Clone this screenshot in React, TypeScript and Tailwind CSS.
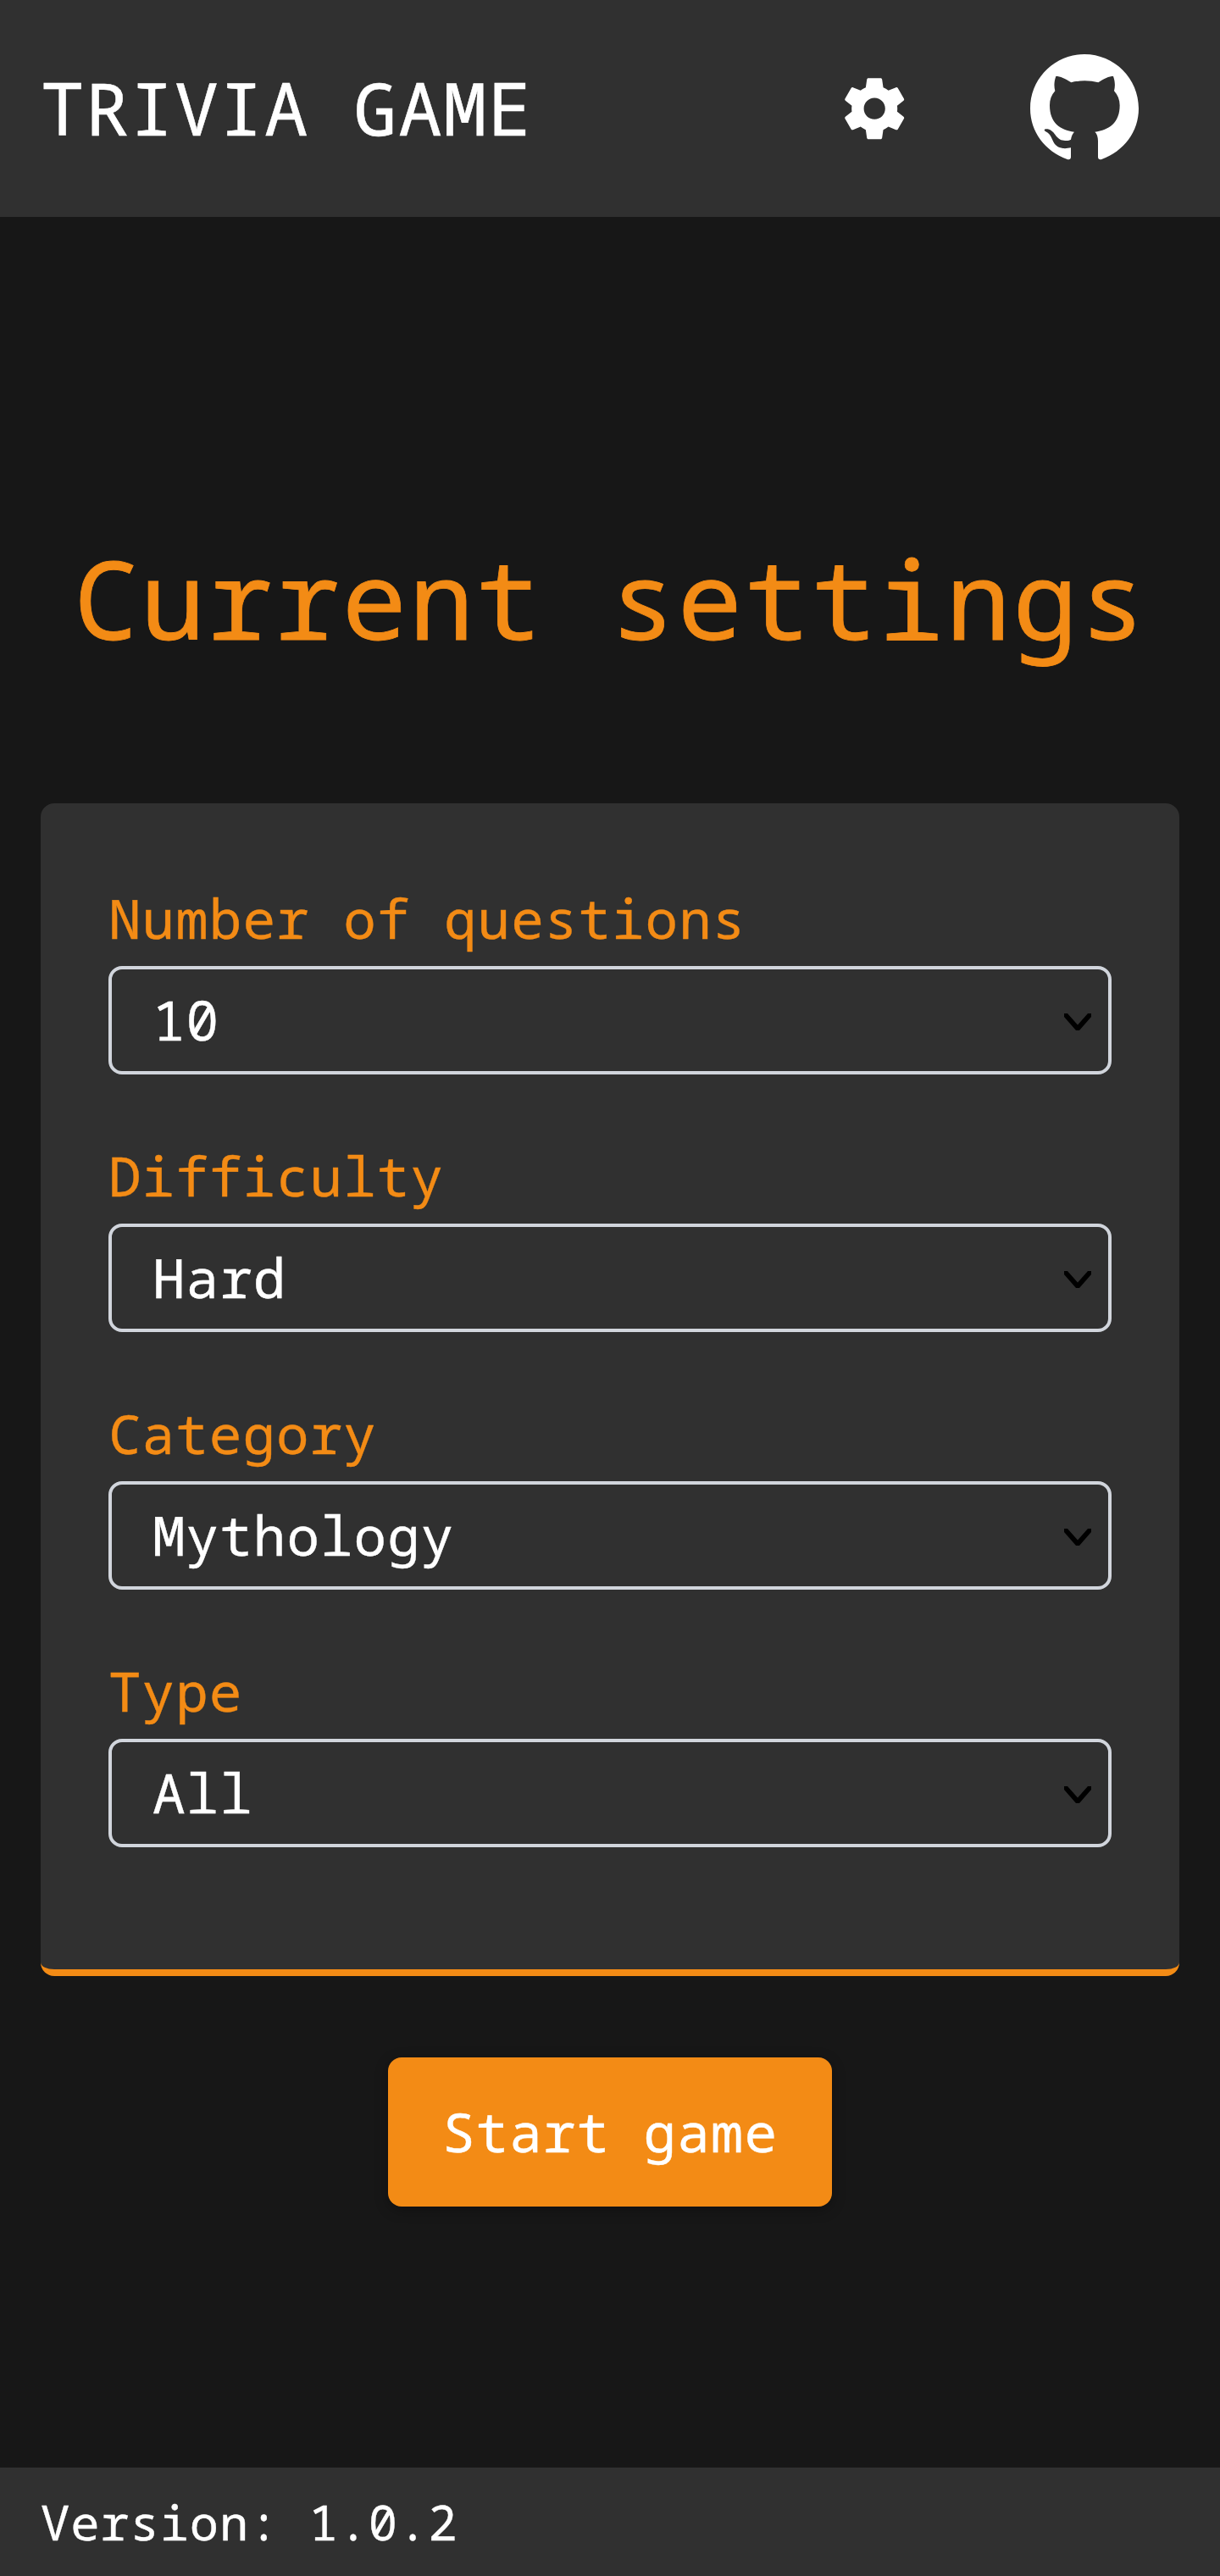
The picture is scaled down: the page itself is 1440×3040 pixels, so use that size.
type Field = { label: string; value: string };

const fields: Field[] = [
  { label: 'Number of questions', value: '10' },
  { label: 'Difficulty', value: 'Hard' },
  { label: 'Category', value: 'Mythology' },
  { label: 'Type', value: 'All' },
];

/* Em-based values resolve against each element's own font size. */
const mono = 'tracking-[0.0159em] [-webkit-text-stroke-width:0.006em]';

function GearIcon() {
  return (
    <svg viewBox="0 0 24 24" className="size-[86.4px]" fill="currentColor">
      <path d="M19.43 12.98c.04-.32.07-.64.07-.98s-.03-.66-.07-.98l2.11-1.65c.19-.15.24-.42.12-.64l-2-3.46c-.12-.22-.39-.3-.61-.22l-2.49 1c-.52-.4-1.08-.73-1.69-.98l-.38-2.65C14.46 2.18 14.25 2 14 2h-4c-.25 0-.46.18-.49.42l-.38 2.65c-.61.25-1.17.59-1.69.98l-2.49-1c-.23-.09-.49 0-.61.22l-2 3.46c-.13.22-.07.49.12.64l2.11 1.65c-.04.32-.07.65-.07.98s.03.66.07.98l-2.11 1.65c-.19.15-.24.42-.12.64l2 3.46c.12.22.39.3.61.22l2.49-1c.52.4 1.08.73 1.69.98l.38 2.65c.03.24.24.42.49.42h4c.25 0 .46-.18.49-.42l.38-2.65c.61-.25 1.17-.59 1.69-.98l2.49 1c.23.09.49 0 .61-.22l2-3.46c.12-.22.07-.49-.12-.64l-2.11-1.65zM12 15.5c-1.93 0-3.5-1.57-3.5-3.5s1.57-3.5 3.5-3.5 3.5 1.57 3.5 3.5-1.57 3.5-3.5 3.5z" />
    </svg>
  );
}

/* Octocat mark: a disc with the cat silhouette and its tail cut out. */
function GithubIcon() {
  return (
    <svg viewBox="0 0 384 384" className="size-32" fill="currentColor">
      <path d="M192 0C86 0 0 86 0 192c0 83 52 151 131 180 8 2 13-1 13-8v-33c-10 2-20 3-28 2-18-2-30-11-37-29-7-17-13-24-24-30-8-5-5-9 2-9 14 0 23 8 32 21 11 16 24 21 38 20 8 0 13-2 17-4 2-12 6-21 12-27-50-6-87-32-87-94 0-20 6-37 19-51-4-15-4-33 3-52 15 0 33 8 54 22 31-8 65-8 96 0 20-14 38-22 53-22 7 19 7 37 3 52 13 14 20 31 20 51 0 62-38 88-88 94 7 6 11 17 11 32v57c0 7 5 10 13 8 79-29 131-97 131-180C384 86 298 0 192 0z" />
    </svg>
  );
}

function SelectField({ label, value }: Field) {
  return (
    <div>
      <div className={`${mono} h-28 text-[64.3px] leading-[110px] text-[#f38b15]`}>{label}</div>
      <div className="flex h-32 items-center justify-between rounded-2xl border-4 border-gray-300 pr-5 pl-12">
        <span className={`${mono} h-[120px] text-[64.3px] leading-[118px]`}>{value}</span>
        <svg viewBox="0 0 32 20" className="mt-1 h-5 w-8" fill="#000">
          <path d="M0 0H4L16 13.5 28 0H32V4L18 20H14L0 4z" />
        </svg>
      </div>
    </div>
  );
}

export default function App() {
  return (
    <div className="flex h-[3040px] w-[1440px] flex-col bg-[#171717] font-['Noto_Sans_Mono','DejaVu_Sans_Mono',monospace] whitespace-nowrap text-white">
      <header className="flex h-64 shrink-0 items-center justify-between bg-[#303030] pr-24 pl-12">
        <h1 className={`${mono} pb-[2px] text-[85.7px] leading-[128px]`}>TRIVIA GAME</h1>
        <div className="flex items-center gap-[140.8px]">
          <GearIcon />
          <GithubIcon />
        </div>
      </header>

      <main className="flex grow flex-col items-center px-12 pt-[378px]">
        <h2 className={`${mono} mb-[170px] text-[128.6px] leading-[144px] text-[#f38b15]`}>Current settings</h2>
        <section className="flex h-[1384px] w-full flex-col gap-16 rounded-2xl border-b-8 border-[#f38b15] bg-[#303030] px-20 pt-20">
          {fields.map((f) => (
            <SelectField key={f.label} {...f} />
          ))}
        </section>
        <button
          className={`${mono} mt-24 h-44 w-[524px] rounded-2xl bg-[#f38b15] pb-[2px] text-center text-[64.3px] shadow-[0_4px_16px_rgba(0,0,0,0.3)]`}
        >
          Start game
        </button>
      </main>

      <footer className={`${mono} h-32 shrink-0 bg-[#303030] px-12 text-[57.1px] leading-[128px]`}>Version: 1.0.2</footer>
    </div>
  );
}
